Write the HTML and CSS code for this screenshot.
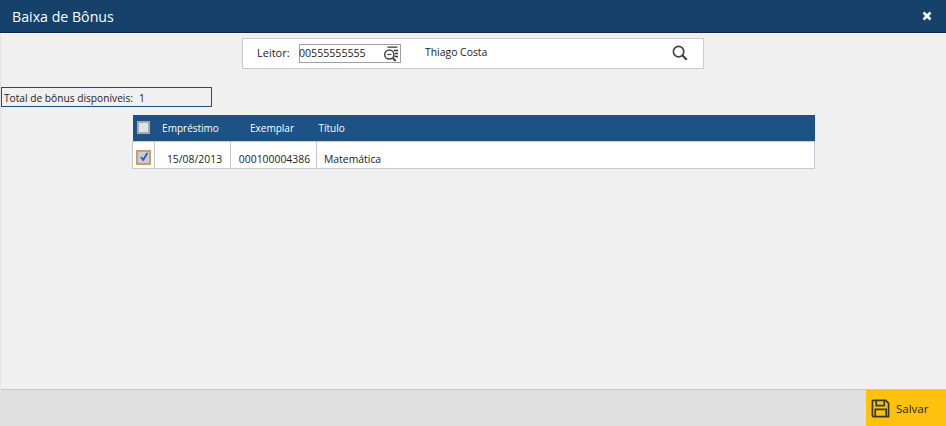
FILE: index.html
```html
<!DOCTYPE html>
<html lang="pt">
<head>
<meta charset="utf-8">
<title>Baixa de Bônus</title>
<link rel="stylesheet" href="styles.css">
</head>
<body>
<div class="window">
  <header class="titlebar">
    <h1 class="title">Baixa de Bônus</h1>
    <svg class="close" viewBox="0 0 10 10" width="10" height="10" aria-label="Fechar"><path d="M1.5 1.5l7 7M8.5 1.5l-7 7" stroke="#fff" stroke-width="2.6" fill="none"/></svg>
  </header>
  <main class="content">
    <div class="reader-row">
      <div class="reader">
        <span class="reader-label">Leitor:</span>
        <div class="reader-input">
          <span>00555555555</span>
          <svg class="list-icon" viewBox="0 0 16 16" width="16" height="16"><path d="M4.5 1.2h10M11 4.5h4M12 7.5h3M11.5 10.5h3.5" stroke="#333" stroke-width="1.3" fill="none"/><circle cx="6.3" cy="8.5" r="4.6" fill="none" stroke="#444" stroke-width="1.5"/><path d="M4.2 8.5h4.2" stroke="#444" stroke-width="1.2"/><path d="M9.7 12l3 3" stroke="#444" stroke-width="2"/></svg>
        </div>
        <span class="reader-name">Thiago Costa</span>
        <svg class="search-icon" viewBox="0 0 16 16" width="16" height="16"><circle cx="6.6" cy="6.6" r="5.2" fill="none" stroke="#444" stroke-width="1.7"/><path d="M10.5 10.5l4.3 4.3" stroke="#444" stroke-width="2.2"/></svg>
      </div>
    </div>
    <div class="total"><span>Total de bônus disponíveis:</span><span class="total-value">1</span></div>
    <table class="grid">
      <thead>
        <tr>
          <th class="col-check"><span class="check check-head"></span></th>
          <th class="col-date">Empréstimo</th>
          <th class="col-copy">Exemplar</th>
          <th class="col-title">Título</th>
        </tr>
      </thead>
      <tbody>
        <tr>
          <td class="col-check"><span class="check check-on"><svg viewBox="0 0 10 10" width="10" height="10"><path d="M2 5l2.2 3L8.4 1" fill="none" stroke="#3a55a8" stroke-width="1.8"/></svg></span></td>
          <td class="cell-date">15/08/2013</td>
          <td class="cell-copy">000100004386</td>
          <td class="cell-title">Matemática</td>
        </tr>
      </tbody>
    </table>
  </main>
  <footer class="footer">
    <button class="save" type="button">
      <svg viewBox="0 0 20 20" width="19" height="19"><path d="M2.5 1.5h13l3 3v14h-16a1 1 0 0 1-1-1v-15a1 1 0 0 1 1-1z" fill="none" stroke="#3a3a2a" stroke-width="1.8"/><path d="M5.5 2v5h8.5V2M4.5 18v-7h11.5v7" fill="none" stroke="#3a3a2a" stroke-width="1.8"/></svg>
      <span>Salvar</span>
    </button>
  </footer>
</div>
</body>
</html>
```
FILE: styles.css
```css
* { box-sizing: border-box; }
html, body { margin: 0; height: 100%; }
body { font-family: "Open Sans", "DejaVu Sans", sans-serif; font-size: 10px; color: #1c1c1c; background: #f0f0f0; overflow: hidden; }
.window { height: 426px; width: 946px; display: flex; flex-direction: column; border-left: 1px solid #e4e4e4; }
.titlebar { height: 33px; flex: none; margin-left: -1px; background: #15416b; border-bottom: 1px solid #0b2a47; display: flex; align-items: center; justify-content: space-between; padding: 0 14px 0 12px; }
.title { margin: 0; color: #fff; font-size: 14.2px; font-weight: 400; }
.close { display: block; }
.content { flex: 1; display: flex; flex-direction: column; }
.reader-row { display: flex; justify-content: center; padding: 5px 0 0 0; }
.reader { width: 462px; height: 31px; margin-left: -1px; background: #fff; border: 1px solid #c8ccd0; display: flex; align-items: center; padding-left: 14px; font-size: 11px; }
.reader-label { width: 42px; font-size: 11px; margin-top: -3px; }
.reader-input { width: 102px; height: 19px; border: 1px solid #a0a0a0; display: flex; align-items: center; justify-content: space-between; padding: 0 1px 0 0; font-size: 10.6px; line-height: 15px; }
.reader-input span { margin-left: -1px; }
.reader-name { margin-left: 24px; width: 247px; font-size: 10.4px; margin-top: -3px; }
.search-icon { display: block; margin-top: -1px; }
.total { width: 211px; height: 20px; margin-top: 18px; border: 1px solid #1f4e79; padding: 1px 0 0 2px; display: flex; align-items: center; gap: 6px; font-size: 10.2px; }
.grid { width: 683px; margin: 8px 0 0 131px; border-collapse: collapse; table-layout: fixed; font-size: 10.4px; }
.grid th { background: #1c5285; color: #fff; font-weight: 400; height: 26px; padding: 0; font-size: 10px; }
th.col-date { padding-right: 4px; }
th.col-copy { padding-right: 3px; }
.grid td { background: #fff; height: 27px; border: 1px solid #c3cbd0; padding: 9px 0 0 0; }
.col-check { width: 22px; }
.col-date { width: 76px; }
.col-copy { width: 86px; }
th.col-title { text-align: left; padding-left: 2px; }
.grid td.col-check { padding: 0; vertical-align: top; }
.cell-date, .cell-copy { text-align: center; }
.grid td.cell-date { padding-left: 4px; }
.grid td.cell-copy { padding-left: 2px; }
.grid td.cell-title { padding-left: 7px; }
.check { display: block; width: 13px; height: 13px; margin: 0 auto; }
.check-head { background: #dfe2e6; border: 2px solid #a6a9ad; margin-left: 4px; }
.check-on { width: 15px; height: 15px; margin: 8px 0 0 3px; background: #c6cbd8; border: 2px solid #c9a063; }
.check-on svg { display: block; margin: 0.5px; }
.footer { height: 37px; flex: none; margin-top: auto; background: #e0e0e0; border-top: 1px solid #c8c8c8; display: flex; justify-content: flex-end; }
.save { width: 80px; height: 36px; border: 0; background: #fec10d; display: flex; align-items: center; gap: 6px; padding: 0 0 0 5px; font: inherit; font-size: 11.5px; color: #222; }
```
